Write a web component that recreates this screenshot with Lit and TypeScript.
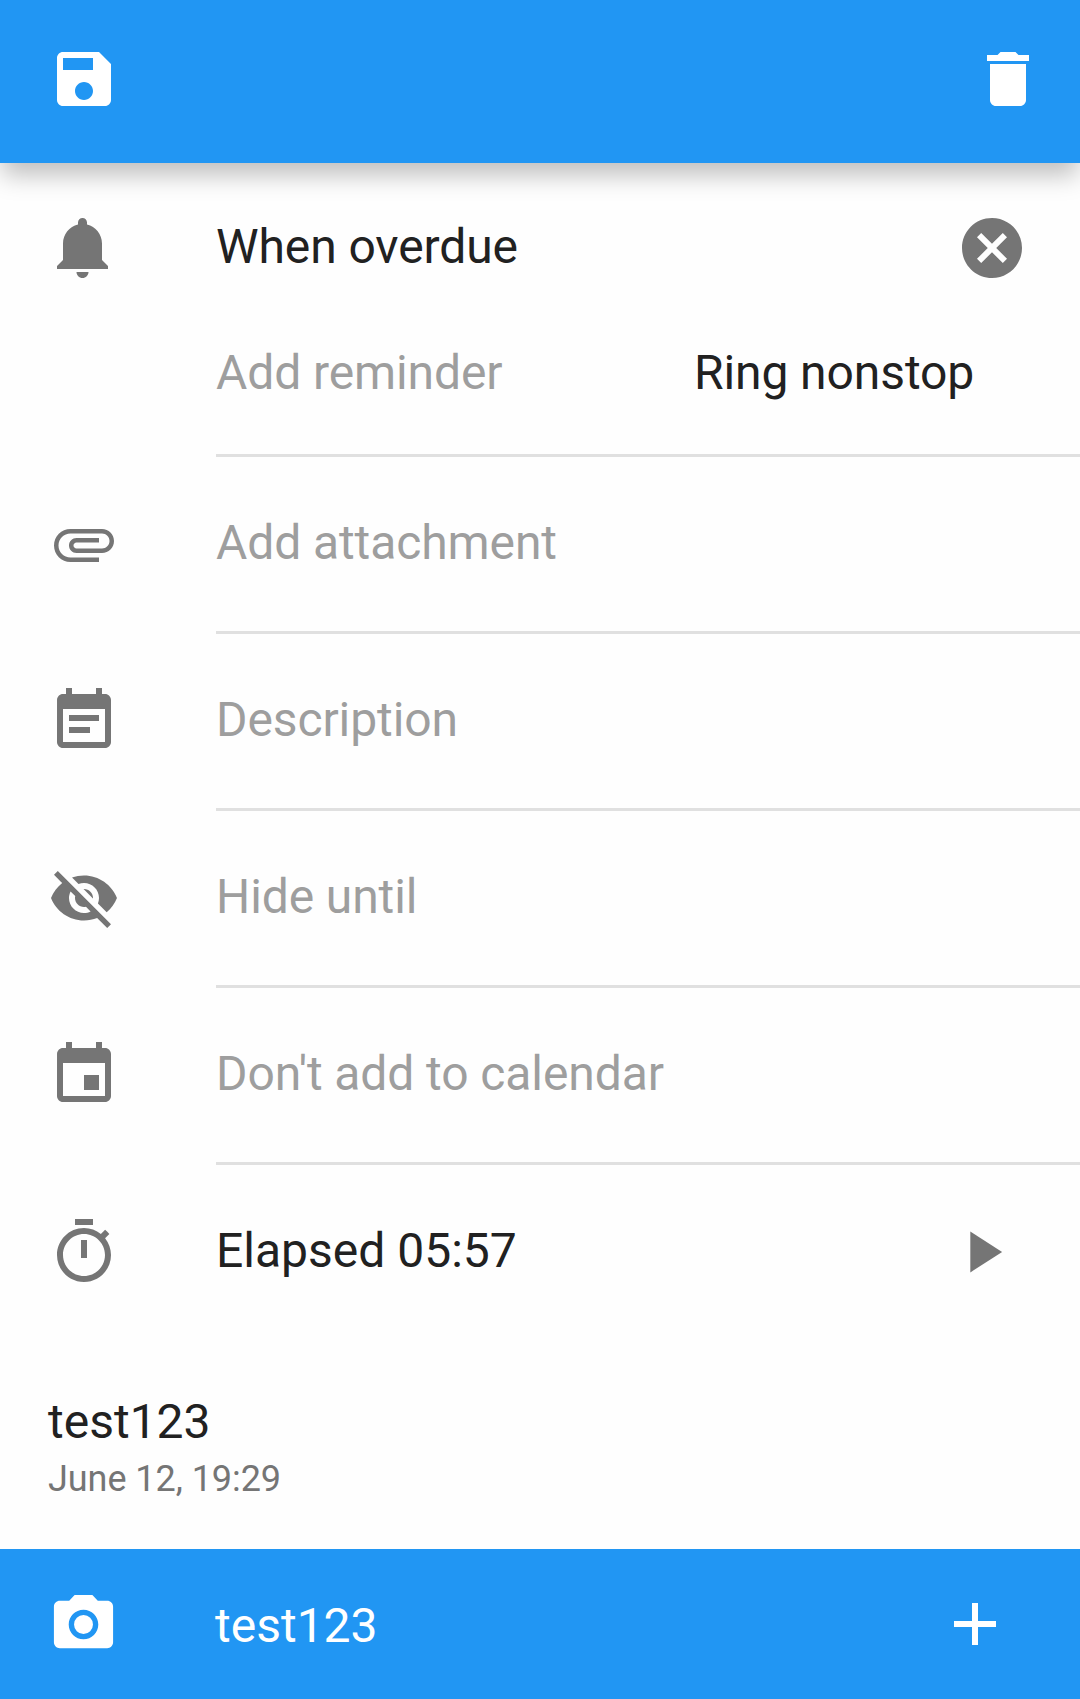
import { LitElement, html, css } from "lit";
import { customElement, property } from "lit/decorators.js";

const ICONS: Record<string, string> = {
  save: "M17 3H5c-1.11 0-2 .9-2 2v14c0 1.1.89 2 2 2h14c1.1 0 2-.9 2-2V7l-4-4zm-5 16c-1.66 0-3-1.34-3-3s1.34-3 3-3 3 1.34 3 3-1.34 3-3 3zm3-10H5V5h10v4z",
  delete: "M6 19c0 1.1.9 2 2 2h8c1.1 0 2-.9 2-2V7H6v12zM19 4h-3.5l-1-1h-5l-1 1H5v2h14V4z",
  bell: "M11.5 22c1.1 0 2-.9 2-2h-4c0 1.1.9 2 2 2zm6.5-6v-5.5c0-3.07-2.13-5.64-5-6.32V3.5c0-.83-.67-1.5-1.5-1.5S10 2.67 10 3.5v.68c-2.87.68-5 3.25-5 6.32V16l-2 2v1h17v-1l-2-2z",
  cancel: "M12 2C6.47 2 2 6.47 2 12s4.47 10 10 10 10-4.47 10-10S17.53 2 12 2zm5 13.59L15.59 17 12 13.41 8.41 17 7 15.59 10.59 12 7 8.41 8.41 7 12 10.59 15.59 7 17 8.41 13.41 12 17 15.59z",
  attachment: "M7.5 18C4.46 18 2 15.54 2 12.5S4.46 7 7.5 7H18c2.21 0 4 1.79 4 4s-1.79 4-4 4H9.5C8.12 15 7 13.88 7 12.5S8.12 10 9.5 10H17v1.5H9.5c-.55 0-1 .45-1 1s.45 1 1 1H18c1.38 0 2.5-1.12 2.5-2.5S19.38 8.5 18 8.5H7.5c-2.21 0-4 1.79-4 4s1.79 4 4 4H17V18H7.5z",
  note: "M17 10H7v2h10v-2zm2-7h-1V1h-2v2H8V1H6v2H5c-1.11 0-1.99.9-1.99 2L3 19c0 1.1.89 2 2 2h14c1.1 0 2-.9 2-2V5c0-1.1-.9-2-2-2zm0 16H5V8h14v11zm-5-5H7v2h7v-2z",
  hidden: "M12 7c2.76 0 5 2.24 5 5 0 .65-.13 1.26-.36 1.83l2.92 2.92c1.51-1.26 2.7-2.89 3.43-4.75-1.73-4.39-6-7.5-11-7.5-1.4 0-2.74.25-3.98.7l2.16 2.16C10.74 7.13 11.35 7 12 7zM2 4.27l2.28 2.28.46.46C3.08 8.3 1.78 10.02 1 12c1.73 4.39 6 7.5 11 7.5 1.55 0 3.03-.3 4.38-.84l.42.42L19.73 22 21 20.73 3.27 3 2 4.27zM7.53 9.8l1.55 1.55c-.05.21-.08.43-.08.65 0 1.66 1.34 3 3 3 .22 0 .44-.03.65-.08l1.55 1.55c-.67.33-1.41.53-2.2.53-2.76 0-5-2.24-5-5 0-.79.2-1.53.53-2.2zm4.31-.78l3.15 3.15.02-.16c0-1.66-1.34-3-3-3l-.17.01z",
  event: "M17 12h-5v5h5v-5zM16 1v2H8V1H6v2H5c-1.11 0-1.99.9-1.99 2L3 19c0 1.1.89 2 2 2h14c1.1 0 2-.9 2-2V5c0-1.1-.9-2-2-2h-1V1h-2zm3 18H5V8h14v11z",
  timer: "M15 1H9v2h6V1zm-4 13h2V8h-2v6zm8.03-6.61l1.42-1.42c-.43-.51-.9-.99-1.41-1.41l-1.42 1.42C16.07 4.74 14.12 4 12 4c-4.97 0-9 4.03-9 9s4.02 9 9 9 9-4.03 9-9c0-2.12-.74-4.07-1.97-5.61zM12 20c-3.87 0-7-3.13-7-7s3.13-7 7-7 7 3.13 7 7-3.13 7-7 7z",
  play: "M8.1 5.2v13.6l10.6-6.8z",
  camera: "M12 8.8a3.2 3.2 0 1 0 0 6.4 3.2 3.2 0 1 0 0-6.4zM9 2L7.17 4H4c-1.1 0-2 .9-2 2v12c0 1.1.9 2 2 2h16c1.1 0 2-.9 2-2V6c0-1.1-.9-2-2-2h-3.17L15 2H9zm3 15c-2.76 0-5-2.24-5-5s2.24-5 5-5 5 2.24 5 5-2.24 5-5 5z",
  add: "M19 13h-6v6h-2v-6H5v-2h6V5h2v6h6v2z",
};

@customElement("task-icon")
export class TaskIcon extends LitElement {
  @property() name = "";
  static styles = css`
    :host {
      display: block;
      flex: none;
      width: 72px;
      height: 72px;
    }
    .glyph {
      display: block;
      width: 100%;
      height: 100%;
      fill: currentColor;
    }
  `;
  render() {
    return html`<svg class="glyph" viewBox="0 0 24 24"><path d=${ICONS[this.name] ?? ""}></path></svg>`;
  }
}

const FIELDS = [
  { icon: "attachment", label: "Add attachment" },
  { icon: "note", label: "Description" },
  { icon: "hidden", label: "Hide until" },
  { icon: "event", label: "Don't add to calendar" },
];

@customElement("app-root")
export class AppRoot extends LitElement {
  static styles = css`
    :host {
      display: flex;
      flex-direction: column;
      height: 1699px;
      overflow: hidden;
      background: #fefefe;
      color: #212121;
      font: 48px/56px Roboto, "Liberation Sans", sans-serif;
    }
    .toolbar {
      position: relative;
      flex: none;
      box-sizing: border-box;
      height: 163px;
      padding: 43px 36px 0 48px;
      display: flex;
      justify-content: space-between;
      background: #2196f3;
      color: #fff;
      box-shadow: 0 14px 23px -2px rgba(0, 0, 0, 0.25);
    }
    .row {
      flex: none;
      display: grid;
      grid-template-columns: 168px 1fr;
      padding-left: 48px;
      color: #757575;
    }
    .body {
      display: flex;
      flex-direction: column;
      justify-content: center;
      border-bottom: 3px solid #e0e0e0;
    }
    .lead {
      align-self: center;
      margin-bottom: 3px;
    }
    .field {
      height: 177px;
    }
    .reminders {
      height: 294px;
      grid-template-rows: 170px 124px;
    }
    .reminders .lead {
      margin-bottom: 0;
    }
    .line {
      display: flex;
      align-items: center;
      justify-content: space-between;
      padding-right: 52px;
    }
    .second {
      grid-column: 2;
      justify-content: flex-start;
      align-items: flex-start;
      padding: 12px 0 0;
      border-bottom: 3px solid #e0e0e0;
    }
    .hint {
      color: #9e9e9e;
    }
    .value {
      color: #212121;
    }
    .text {
      padding-bottom: 2px;
      letter-spacing: -0.1px;
      white-space: nowrap;
    }
    .second .hint {
      width: 478px;
    }
    .timer {
      height: 174px;
    }
    .timer .lead {
      margin-bottom: 0;
    }
    .timer .line {
      padding-right: 62px;
    }
    .timer .text {
      letter-spacing: 0;
    }
    .comment {
      flex: 1;
      padding: 55px 48px 0;
    }
    .date {
      font-size: 36px;
      line-height: 42px;
      padding-top: 8px;
      letter-spacing: -0.05px;
      color: #757575;
    }
    .composer {
      flex: none;
      height: 150px;
      display: grid;
      grid-template-columns: 167px 1fr auto;
      align-items: center;
      padding: 0 69px 0 48px;
      background: #2196f3;
      color: #fff;
    }
    .camera {
      width: 71px;
      height: 71px;
    }
    .entry {
      padding-top: 4px;
    }
  `;

  render() {
    return html`
      <header class="toolbar">
        <task-icon name="save"></task-icon>
        <task-icon name="delete"></task-icon>
      </header>
      <section class="row reminders">
        <task-icon class="lead" name="bell"></task-icon>
        <div class="line">
          <span class="text value">When overdue</span>
          <task-icon name="cancel"></task-icon>
        </div>
        <div class="line second">
          <span class="text hint">Add reminder</span>
          <span class="text value">Ring nonstop</span>
        </div>
      </section>
      ${FIELDS.map(
        (f) => html`<section class="row field">
          <task-icon class="lead" name=${f.icon}></task-icon>
          <div class="body"><span class="text hint">${f.label}</span></div>
        </section>`
      )}
      <section class="row timer">
        <task-icon class="lead" name="timer"></task-icon>
        <div class="line">
          <span class="text value">Elapsed 05:57</span>
          <task-icon name="play"></task-icon>
        </div>
      </section>
      <section class="comment">
        <div>test123</div>
        <div class="date">June 12, 19:29</div>
      </section>
      <footer class="composer">
        <task-icon class="camera" name="camera"></task-icon>
        <span class="entry">test123</span>
        <task-icon name="add"></task-icon>
      </footer>
    `;
  }
}
